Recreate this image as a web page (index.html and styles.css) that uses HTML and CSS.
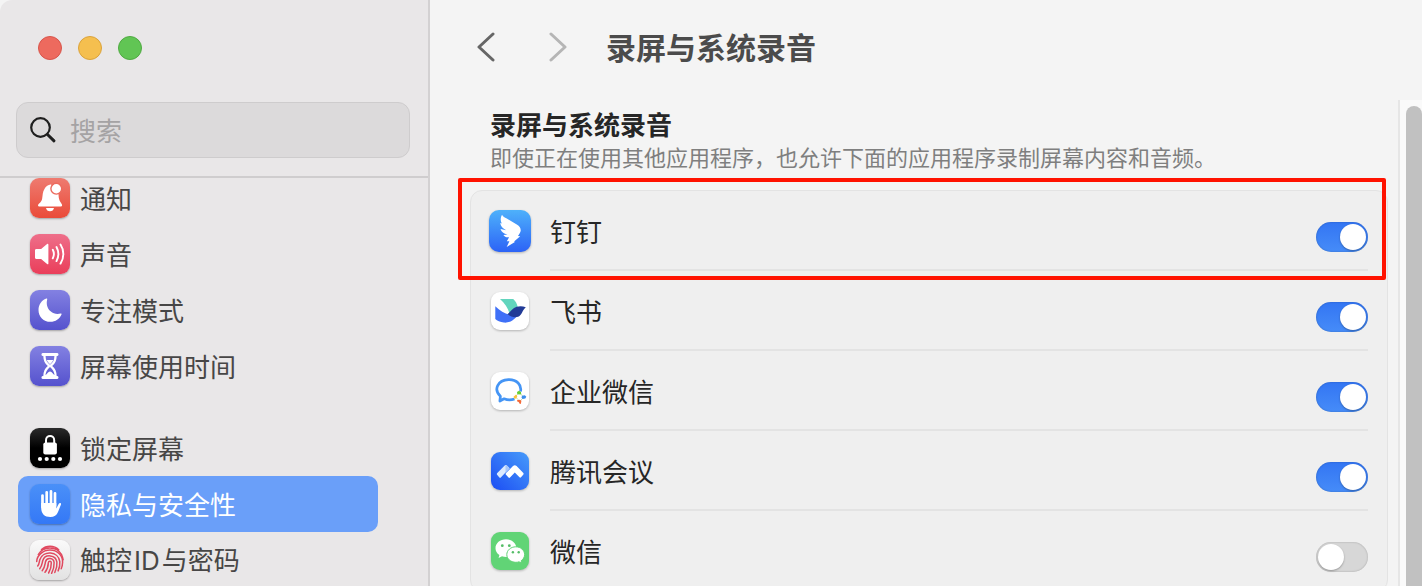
FILE: index.html
```html
<!DOCTYPE html>
<html lang="zh-CN">

<head>
  <meta charset="UTF-8" />
  <meta name="viewport" content="width=device-width, initial-scale=1.0" />
  <title>录屏与系统录音</title>
  <link rel="stylesheet" href="styles.css">
</head>

<body>
  <div class="window">
    <aside class="sidebar">
      <div class="sidebar-top">
        <div class="lights">
          <button type="button" class="light red" aria-label="关闭"></button>
          <button type="button" class="light yellow" aria-label="最小化"></button>
          <button type="button" class="light green" aria-label="缩放"></button>
        </div>
        <label class="search">
          <svg width="28" height="28" viewBox="0 0 28 28" fill="none" stroke="#1f1f1f" stroke-linecap="round">
            <circle cx="11.5" cy="11.5" r="9.3" stroke-width="2.2" />
            <path d="M18.5 18.5l6.5 6.3" stroke-width="3" />
          </svg>
          <input type="text" placeholder="搜索" aria-label="搜索" />
        </label>
      </div>

      <div class="sidebar-scroll">
        <nav class="nav">
          <a href="#" class="nav-item">
            <svg class="icon bg-red" viewBox="0 0 40 40" fill="#fff">
              <path d="M8 27.2c0-1.400 3.300-2.500 4.100-6.200.7-3.600.3-7.200 2.500-10.300 1.200-1.800 2.700-3 4.300-3.600 1-.6 1.600-.7 2.700-.2-1.300 2.500-1 5.300.8 7.100 1.700 1.700 4.200 2 6 .9.300 2.200.2 4.300.7 6.200.9 3.500 3 4.500 3 6.100 0 .9-.7 1.300-1.700 1.300H9.700c-1 0-1.700-.4-1.700-1.300z" />
              <circle cx="26.300" cy="10.700" r="5.400" stroke="#ec6b5e" stroke-width="1.400" />
              <path d="M16 30h8c-.3 2-1.900 3.300-4 3.300S16.300 32 16 30z" />
            </svg>
            通知
          </a>
          <a href="#" class="nav-item">
            <svg class="icon bg-pink" viewBox="0 0 40 40" fill="#fff">
              <path d="M6.500 15h4.600l6-5c.7-.5 1.300-.1 1.300.7v18.700c0 .9-.7 1.200-1.300.7l-6-5H6.500c-1 0-1.500-.6-1.500-1.500v-7.100c0-1 .5-1.500 1.500-1.500z" />
              <path d="M22.800 15.800c1.300 2.500 1.300 6 0 8.500M26.500 13c2.300 4.300 2.300 9.800 0 14.100M30.500 10.500c3.800 5.600 3.800 13.500 0 19.100" fill="none" stroke="#fff" stroke-width="1.900" stroke-linecap="round" />
            </svg>
            声音
          </a>
          <a href="#" class="nav-item">
            <svg class="icon bg-purple" viewBox="0 0 40 40" fill="#fff">
              <path d="M16.300 8.600c.6-.3 1.100.2.9.8-1.200 4.400.1 9 3.400 11.900 2.900 2.500 6.500 3.300 10 2.200.7-.2 1.200.3.9 1-1.800 4.500-6.100 7.300-11 7.300-6.900 0-12-5.200-12-11.900 0-5 3-9.400 7.800-11.300z" />
            </svg>
            专注模式
          </a>
          <a href="#" class="nav-item">
            <svg class="icon bg-purple" viewBox="0 0 40 40" fill="#fff">
              <path fill-rule="evenodd" d="M12.700 7h14.600c1.600 0 1.600 3 0 3h-.6c-.1 4.500-1.400 7.300-4.500 10 3.100 2.700 4.400 5.500 4.500 10h.6c1.600 0 1.600 3 0 3H12.700c-1.600 0-1.600-3 0-3h.6c.1-4.500 1.400-7.300 4.500-10-3.100-2.700-4.400-5.500-4.500-10h-.6c-1.600 0-1.600-3 0-3zM15.600 10c.1 4.300 1.500 6.600 4.400 8.800 2.900-2.200 4.300-4.500 4.400-8.800zM20 20.900c-3.100 2.600-4.300 5.100-4.500 8.300l2.800-2.900c1.200-1.200 2.200-1.200 3.400 0l2.800 2.900c-.2-3.200-1.400-5.700-4.500-8.300z" />
              <path d="M16.800 14h6.400c-.7 1.900-1.700 3-3.200 4.200-1.500-1.200-2.500-2.300-3.200-4.200z" />
            </svg>
            屏幕使用时间
          </a>

          <a href="#" class="nav-item group-start">
            <svg class="icon bg-black" viewBox="0 0 40 40" fill="#fff">
              <rect x="13.300" y="14.500" width="13.600" height="12" rx="2" />
              <path d="M16 15.500v-3.300c0-5.600 8.200-5.600 8.200 0v3.300" fill="none" stroke="#fff" stroke-width="2" />
              <circle cx="10" cy="31" r="2.100" />
              <circle cx="16.700" cy="31" r="2.100" />
              <circle cx="23.300" cy="31" r="2.100" />
              <circle cx="30" cy="31" r="2.100" />
            </svg>
            锁定屏幕
          </a>
          <a href="#" class="nav-item active">
            <svg class="icon bg-blue" viewBox="0 0 40 40" fill="none" stroke="#fff" stroke-linecap="round" stroke-linejoin="round">
              <path d="M12.500 11.500V23M16.700 8.300V21M21 7.300V21M25 9.300V22" stroke-width="2.700" />
              <path d="M11.200 19h15.100v5.500l2.500-4.700c.8-1.500 2.700-.9 2.200.8l-3 7.400c-1.300 3.200-3.800 5-7.700 5-5.700 0-9.100-3.300-9.100-9z" fill="#fff" stroke="none" />
            </svg>
            隐私与安全性
          </a>
          <a href="#" class="nav-item">
            <svg class="icon bg-white" viewBox="0 0 40 40" fill="none" stroke="#e0495f" stroke-width="1.500" stroke-linecap="round">
              <path d="M11.500 9.600c5-4.400 12.400-4.300 17.200.2M8.300 14.500c5-8.800 18.200-8.800 23.300.2.700 1.600 1.200 3.200 1.500 5" />
              <path d="M6.700 21.500c.2-5.700 5.700-11.500 13.300-11.500s13 5.700 12.600 12.500c-.1 2.300-.6 4.300-1.400 6.200" />
              <path d="M7.700 26c1.700-2 1.400-4.100 2.100-6.300 3.300-9.600 18.700-8.700 20 2 .3 3.300-.4 6.400-1.700 9.200" />
              <path d="M9.700 28.700c2.500-2.800 2.300-5.300 3-8 2.300-7.200 13.300-6.100 14.200 1.500.4 3.700-.6 7.200-2.100 10.300" />
              <path d="M12.200 30.700c2.800-3.100 2.700-6 3.300-9 1.200-4.700 8.200-4 8.600.9.200 3.900-.8 7.500-2.500 10.700" />
              <path d="M15 32.300c2.500-3 3.200-6.300 3.400-9.700.3-2 2.800-1.900 2.900.1.100 3.700-.7 6.900-2.700 10.300" />
            </svg>
            <span>触控<span class="latin">ID</span>与密码</span>
          </a>
        </nav>
      </div>
    </aside>

    <main class="main">
      <header class="toolbar">
        <button type="button" class="arrow" aria-label="后退">
          <svg width="20" height="30" viewBox="0 0 20 30"><path d="M17 2L3 15l14 13" stroke="#666" /></svg>
        </button>
        <button type="button" class="arrow" aria-label="前进">
          <svg width="20" height="30" viewBox="0 0 20 30"><path d="M3 2l14 13L3 28" stroke="#b5b5b5" /></svg>
        </button>
        <h1>录屏与系统录音</h1>
      </header>

      <div class="content">
        <section class="panel">
          <h2>录屏与系统录音</h2>
          <p>即使正在使用其他应用程序，也允许下面的应用程序录制屏幕内容和音频。</p>

          <div class="card">
            <div class="row marked">
              <svg class="app-icon" viewBox="0 0 42 42">
                <defs>
                  <linearGradient id="ding" x1="0" y1="0" x2="0" y2="1">
                    <stop offset="0" stop-color="#4eb1fb" />
                    <stop offset="1" stop-color="#2c63f6" />
                  </linearGradient>
                </defs>
                <rect width="42" height="42" rx="10" fill="url(#ding)" />
                <path d="M13 4.700c1 1.700 2.600 2.700 4.800 3.900l10.400 6.200c2.300 1.400 4 3.800 3.400 6.400-.5 1.900-1.700 3.300-2.700 4.700l2.300.3-6.100 5.200.8.500-8.200 5.100 2.700-5.700h-2.600l2.300-4.100c-2.300.4-4.400-.1-5.700-2.200l4.100-.5c-3.800-.7-6.100-2.500-7-5.500l5.700 1.200c-3.500-1.900-5.500-3.900-6-7.200l1.600.6c-1.500-3-1.500-6.200.2-8.900z" fill="#fff" />
              </svg>
              <div class="row-body">
                <label for="dingtalk">钉钉</label>
                <input type="checkbox" id="dingtalk" class="switch" checked />
              </div>
            </div>
            <div class="row">
              <svg class="app-icon" viewBox="0 0 42 42">
                <rect x="2" y="2" width="38" height="38" rx="9" fill="#fff" />
                <path d="M11 9h13.200c2.400 2.100 3.900 4.700 4.500 8-3.300 1-5.400 3.500-8.200 6.500C19 18 15.700 13.300 11 9z" fill="#62d5bd" />
                <path d="M6.300 16.300c4.500 4.500 9.200 7.200 14.300 8.500 3 .8 5.500.4 8.300-.5-3.300 6-8 8.700-14 8.300-3.800-.2-6.800-1.700-8.600-3.500z" fill="#3f70f7" />
                <path d="M18.500 24.300c2.800-2.600 5.400-6.400 9.100-7.500 3.200-1 6.200-.8 9.200.5-3.500 3-3.900 7.600-7 9.300-3.700 1.600-7.700.4-11.300-2.300z" fill="#223b97" />
              </svg>
              <div class="row-body">
                <label for="feishu">飞书</label>
                <input type="checkbox" id="feishu" class="switch" checked />
              </div>
            </div>
            <div class="row">
              <svg class="app-icon" viewBox="0 0 42 42">
                <rect x="2" y="2" width="38" height="38" rx="9" fill="#fff" />
                <path d="M25.500 29c-3.300 1.200-7.200 1.100-10.400-.2l-4.200 2.200.5-4.800c-7.300-6.900-2.600-16 8.100-16.500 8.200-.3 13.500 5.300 12 11.800" fill="none" stroke="#4595f5" stroke-width="2.700" stroke-linejoin="round" />
                <path d="M26.300 26.800l4-4.300 4.500 4.800-4 3.900z" fill="#fff" stroke="#c8dcae" stroke-width="1" />
                <path d="M28 22l2-1.300 2 1.300.2 2.300-2.400.3-1.500-.7z" fill="#67cf35" />
                <path d="M33 25.800l2.800-.5 1.500 1.500-1 1.800-2.600.4-1.200-1.200z" fill="#3b8eed" />
                <path d="M28 30.300l2.800-.5 1.600.9-.5 3-1 .2-1.300-1.800-1.600-.8z" fill="#f56a38" />
                <path d="M24.500 26.700l2.600-2.200 1.200 1.800-1.100 2.300-1.800.1z" fill="#fac337" />
              </svg>
              <div class="row-body">
                <label for="wecom">企业微信</label>
                <input type="checkbox" id="wecom" class="switch" checked />
              </div>
            </div>
            <div class="row">
              <svg class="app-icon" viewBox="0 0 42 42">
                <defs>
                  <linearGradient id="meet" x1="0" y1="1" x2="1" y2="0">
                    <stop offset="0" stop-color="#1c4df3" />
                    <stop offset="1" stop-color="#479bfa" />
                  </linearGradient>
                </defs>
                <rect x="2" y="2" width="38" height="38" rx="9" fill="url(#meet)" />
                <path d="M8.300 23l6.900-7c1.200-1.200 2-1.200 3.200 0l2.200 2.300-8.800 9.200c-.5.5-.9.5-1.400 0l-2.100-2.500c-.6-.7-.6-1.300 0-2z" fill="#dbe9fe" />
                <path d="M16.500 15.200c.8-.2 1.400.3 2 .9l2.200 2.300-4.200 4.200z" fill="#a6c7fc" />
                <path d="M17 23.100l7-7c1.300-1.300 2.300-1.300 3.600 0l6.500 6.700c.7.700.7 1.300.1 2L32 27.300c-.5.500-1 .5-1.500 0l-4.700-4.900-4.800 5.100c-.5.500-1 .5-1.500 0l-2.500-2.700c-.5-.6-.5-1.200 0-1.700z" fill="#fff" />
              </svg>
              <div class="row-body">
                <label for="meeting">腾讯会议</label>
                <input type="checkbox" id="meeting" class="switch" checked />
              </div>
            </div>
            <div class="row">
              <svg class="app-icon" viewBox="0 0 42 42">
                <rect x="2" y="2" width="38" height="38" rx="9" fill="#61d476" />
                <path d="M17 9.300c-5.900 0-10.500 4-10.500 8.900 0 2.800 1.400 5.200 3.900 6.900l-.8 3 3.400-1.800c1.300.4 2.700.6 4.100.6 5.800 0 10.300-3.900 10.300-8.700s-4.600-8.900-10.400-8.900z" fill="#fff" />
                <circle cx="13.300" cy="15.700" r="1.400" fill="#55bd67" />
                <circle cx="20.300" cy="15.700" r="1.400" fill="#55bd67" />
                <path d="M26.800 16.800c-5 0-9 3.500-9 7.800s4 7.700 9 7.700c1.100 0 2.200-.1 3.200-.5l2.800 1.500-.7-2.500c2.200-1.500 3.500-3.700 3.500-6.200 0-4.300-3.900-7.800-8.800-7.800z" fill="#fff" stroke="#61d476" stroke-width="1" />
                <circle cx="23.900" cy="22.300" r="1.200" fill="#55bd67" />
                <circle cx="29.700" cy="22.300" r="1.200" fill="#55bd67" />
              </svg>
              <div class="row-body">
                <label for="wechat">微信</label>
                <input type="checkbox" id="wechat" class="switch" />
              </div>
            </div>
          </div>
        </section>
        <div class="scrollbar">
          <div class="thumb"></div>
        </div>
      </div>
    </main>
  </div>
</body>

</html>
```

FILE: styles.css
```css
* {
  box-sizing: border-box;
}

body {
  margin: 0;
  background-color: #f4f4f4;
  font-family: "Noto Sans CJK SC", sans-serif;
  font-size: 26px;
  color: #262626;
}

h1,
h2,
p {
  margin: 0;
}

button {
  padding: 0;
  border: none;
  background: none;
}

.window {
  display: flex;
  height: 100vh;
  overflow: hidden;
  border-top-left-radius: 12px;
}

/* sidebar */
.sidebar {
  display: flex;
  flex-direction: column;
  width: 430px;
  flex-shrink: 0;
  background-color: #e9e7e8;
  border-right: 2px solid #d3d1d2;
}

.sidebar-top {
  padding: 36px 18px 18px 16px;
  border-bottom: 2px solid #cfcdce;
}

.lights {
  display: flex;
  gap: 16px;
  padding-left: 22px;
  margin-bottom: 42px;
}

.light {
  width: 24px;
  height: 24px;
  border-radius: 50%;
}

.red {
  background-color: #ed6a5e;
  border: 1px solid #d8554b;
}

.yellow {
  background-color: #f5bf4f;
  border: 1px solid #dba33c;
}

.green {
  background-color: #61c554;
  border: 1px solid #50aa42;
}

.search {
  display: flex;
  align-items: center;
  gap: 13px;
  height: 56px;
  padding: 0 12px;
  background-color: #dcdadb;
  border: 1px solid #cecccd;
  border-radius: 12px;
}

.search input {
  flex: 1;
  min-width: 0;
  padding: 0 0 2px;
  border: none;
  outline: none;
  background: none;
  font: inherit;
}

.search input::placeholder {
  color: #a5a3a4;
}

.sidebar-scroll {
  flex: 1;
  min-height: 0;
  overflow: hidden;
}

.nav {
  margin-top: -8px;
  padding: 0 50px 0 18px;
}

.nav-item {
  display: flex;
  align-items: center;
  gap: 10px;
  height: 56px;
  padding: 0 12px;
  border-radius: 10px;
  color: #474646;
  line-height: 54px;
  text-decoration: none;
  white-space: nowrap;
}

.latin {
  margin: 0 2px;
  font-family: Inter, sans-serif;
}

.group-start {
  margin-top: 26px;
}

.active {
  background-color: #6a9ff9;
  color: white;
}

.icon {
  width: 40px;
  height: 40px;
  flex-shrink: 0;
  border-radius: 9px;
  box-shadow: 0 1px 2px rgba(0, 0, 0, 0.3);
}

.bg-red {
  background: linear-gradient(#ee7b70, #ea4b39);
}

.bg-pink {
  background: linear-gradient(#ee6f8a, #ea3e5a);
}

.bg-purple {
  background: linear-gradient(#8381e2, #5552ce);
}

.bg-black {
  background: linear-gradient(#2b2b2b, #000 50%);
}

.bg-blue {
  background: linear-gradient(#4a90f8, #3478f6);
}

.bg-white {
  background: linear-gradient(#fafafa, #e2e2e2);
}

/* right side */
.main {
  display: flex;
  flex-direction: column;
  flex: 1;
  min-width: 0;
}

.toolbar {
  display: flex;
  align-items: center;
  height: 100px;
  flex-shrink: 0;
  padding: 0 46px 6px;
}

.arrow {
  display: flex;
  width: 20px;
  margin-right: 52px;
}

.arrow + h1 {
  margin-left: -14px;
}

.arrow path {
  fill: none;
  stroke-width: 3;
  stroke-linecap: round;
  stroke-linejoin: round;
}

.toolbar h1 {
  padding-bottom: 3px;
  font-size: 30px;
  font-weight: 700;
  color: #4b4b4b;
}

.content {
  display: flex;
  flex: 1;
  min-height: 0;
  overflow: hidden;
}

.panel {
  flex: 1;
  min-width: 0;
  padding: 7px 10px 0 40px;
}

.panel h2 {
  padding-left: 20px;
  font-size: 26px;
  line-height: 34px;
}

.panel p {
  padding-left: 20px;
  font-size: 22px;
  line-height: 30px;
  color: #7f7f7f;
}

.card {
  margin-top: 19px;
  padding: 0 19px 0 18px;
  background-color: #efefef;
  border: 1px solid #e3e3e3;
  border-radius: 12px;
}

.row {
  position: relative;
  display: flex;
  align-items: center;
  gap: 19px;
  height: 80px;
}

.marked::after {
  content: "";
  position: absolute;
  top: -13px;
  right: -18px;
  bottom: -9px;
  left: -31px;
  border: 4px solid #ff1200;
  border-radius: 2px;
  pointer-events: none;
}

.app-icon {
  width: 42px;
  height: 42px;
  flex-shrink: 0;
  filter: drop-shadow(0 1px 1px rgba(0, 0, 0, 0.25));
}

.row-body {
  display: flex;
  align-items: center;
  justify-content: space-between;
  flex: 1;
  height: 80px;
  border-bottom: 2px solid #e3e3e3;
}

.switch {
  appearance: none;
  width: 52px;
  height: 30px;
  margin: 14px 0 0;
  padding: 2px;
  border-radius: 15px;
  background: #d7d7d7;
  box-shadow: inset 0 0 2px rgba(0, 0, 0, 0.25);
}

.switch::before {
  content: "";
  display: block;
  width: 26px;
  height: 26px;
  border-radius: 50%;
  background-color: white;
  box-shadow: 0 1px 2px rgba(0, 0, 0, 0.3);
}

.switch:checked {
  background: linear-gradient(#3375f3, #468cf8);
}

.switch:checked::before {
  margin-left: 22px;
}

.scrollbar {
  width: 24px;
  padding: 6px 0 0 6px;
  background-color: #fafafa;
  border-left: 2px solid #e6e6e6;
}

.thumb {
  height: 600px;
  background-color: #c1c1c1;
  border-radius: 8px;
}
```
